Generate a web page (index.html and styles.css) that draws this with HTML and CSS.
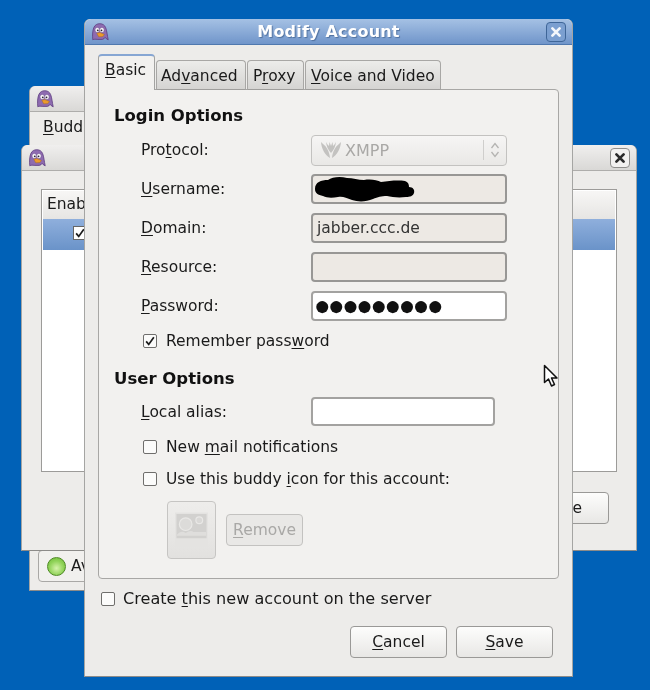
FILE: index.html
```html
<!DOCTYPE html>
<html lang="en">
<head>
<meta charset="utf-8">
<title>Modify Account</title>
<link rel="stylesheet" href="styles.css">
</head>
<body>
<svg class="defs" width="0" height="0" aria-hidden="true">
  <symbol id="pidgin" viewBox="0 0 18 18">
    <path d="M1.800 16.800C1.300 12 1.600 7.600 2.800 4.600 4 1.800 6.200.7 8.800.7c2.600 0 4.800 1.200 5.900 4 1.200 3.100 1.500 7.500 2.500 12.100-1.300-.6-2.400-1.300-3-2.400-.6 1-1.700 1.800-2.900 2H6.200c-1.500-.2-3.200-.5-4.400.4z" fill="#8e6bb0" stroke="#5c3b7f" stroke-width=".8"/>
    <ellipse cx="6.300" cy="7" rx="2.300" ry="2.600" fill="#f5f2f7" stroke="#5c3b7f" stroke-width=".4"/>
    <ellipse cx="10.900" cy="7" rx="2.300" ry="2.600" fill="#f5f2f7" stroke="#5c3b7f" stroke-width=".4"/>
    <circle cx="6.800" cy="7.300" r=".9" fill="#2b2330"/>
    <circle cx="10.500" cy="7.300" r=".9" fill="#2b2330"/>
    <path d="M5.800 10.300l3-.7 4.600 1.800-1.500 2.200-4.200.2z" fill="#eb9a2d" stroke="#a5650f" stroke-width=".4"/>
  </symbol>
  <symbol id="closex" viewBox="0 0 20 20">
    <path d="M6 6l8 8M14 6l-8 8" fill="none" stroke="currentColor" stroke-width="3" stroke-linecap="round"/>
  </symbol>
  <symbol id="tick" viewBox="0 0 14 14">
    <path d="M2.500 7.500l3 3.500 6-8.500" fill="none" stroke="#1c1c1c" stroke-width="2"/>
  </symbol>
</svg>

<main class="desktop">
  <section class="window buddy-window">
    <header class="titlebar titlebar-inactive">
      <svg class="app-icon"><use href="#pidgin"/></svg>
    </header>
    <div class="buddy-menu"><span><u>B</u>uddies</span></div>
    <div class="buddy-fill"></div>
    <div class="status-box">
      <span class="status-dot"></span><span>Available</span>
    </div>
  </section>

  <section class="window accounts-window">
    <header class="titlebar titlebar-inactive">
      <svg class="app-icon"><use href="#pidgin"/></svg>
      <span class="close-btn close-inactive"><svg><use href="#closex"/></svg></span>
    </header>
    <div class="accounts-body">
      <div class="account-list">
        <div class="list-head">Enabled</div>
        <div class="list-selected"><span class="list-check"><svg><use href="#tick"/></svg></span></div>
      </div>
      <div class="accounts-actions"><span class="gtk-btn accounts-close">Close</span></div>
    </div>
  </section>

  <section class="window modify-window">
    <header class="titlebar titlebar-active">
      <svg class="app-icon"><use href="#pidgin"/></svg>
      <h1 class="title">Modify Account</h1>
      <span class="close-btn close-active"><svg><use href="#closex"/></svg></span>
    </header>
    <div class="modify-body">
      <nav class="tabs">
        <span class="tab tab-active"><u>B</u>asic</span>
        <span class="tab">Ad<u>v</u>anced</span>
        <span class="tab">P<u>r</u>oxy</span>
        <span class="tab"><u>V</u>oice and Video</span>
      </nav>
      <div class="panel">
        <h2 class="section-title">Login Options</h2>
        <div class="form-grid">
          <label class="field-label">Pro<u>t</u>ocol:</label>
          <div class="combo">
            <svg class="xmpp-icon" viewBox="0 0 22 18"><path d="M1 1c.5 7 4 13 9 16-.5-6-3-11-7-14zM21 1c-.5 7-4 13-9 16 .5-6 3-11 7-14zM6 1c.5 4 2 8 5 11 3-3 4.500-7 5-11-1 2-2 3-3 4l-.5-4-1.500 4-1.500-4-.5 4c-1-1-2-2-3-4z" fill="#c3c2c0"/></svg>
            <span class="combo-text">XMPP</span>
            <span class="combo-arrows"><svg viewBox="0 0 10 18"><path d="M1.500 7L5 2.500 8.500 7M1.500 11L5 15.500 8.500 11" fill="none" stroke="#b4b3b1" stroke-width="1.300"/></svg></span>
          </div>
          <label class="field-label"><u>U</u>sername:</label>
          <div class="entry entry-readonly">
            <svg class="scribble" viewBox="0 0 102 26"><path d="M1 13C1 6 7 4 14 4c4-3 12-4 19-2 6 0 11 2 17 2 7-1 13 0 17 2 8-1 16-2 24-1 3 1 4 3 4 6 4 0 6 3 5 6-1 3-4 4-8 4-8 1-14 0-19-1-6 0-9 1-14 3-7 3-15 3-21 1-6-2-9-4-14-3-6 1-11 1-15-1C4 19 1 17 1 13z" fill="#000"/></svg>
          </div>
          <label class="field-label"><u>D</u>omain:</label>
          <div class="entry entry-readonly"><span>jabber.ccc.de</span></div>
          <label class="field-label"><u>R</u>esource:</label>
          <div class="entry entry-readonly"></div>
          <label class="field-label"><u>P</u>assword:</label>
          <div class="entry entry-white dots">●●●●●●●●●</div>
        </div>
        <label class="check-row remember"><span class="check"><svg><use href="#tick"/></svg></span><span>Remember pass<u>w</u>ord</span></label>

        <h2 class="section-title user-title">User Options</h2>
        <div class="alias-row">
          <label class="alias-label"><u>L</u>ocal alias:</label>
          <div class="entry entry-white alias-entry"></div>
        </div>
        <label class="check-row mail"><span class="check"></span><span>New <u>m</u>ail notifications</span></label>
        <label class="check-row buddy"><span class="check"></span><span>Use this buddy <u>i</u>con for this account:</span></label>
        <div class="icon-row">
          <span class="icon-btn">
            <svg viewBox="0 0 34 36"><rect x="0" y="0" width="34" height="36" fill="#e4e3e1"/><rect x="1.500" y="1.500" width="31" height="25" fill="#d2d1cf"/><circle cx="11" cy="12" r="6.500" fill="#dcdbd9" stroke="#e9e8e6" stroke-width="1.200"/><circle cx="25" cy="8" r="3.500" fill="#d9d8d6" stroke="#e9e8e6" stroke-width="1.200"/><path d="M2 23c3-4 6-4 9-2 3-2 6-3 8-1h13v4H2z" fill="#dfdedc"/></svg>
          </span>
          <span class="gtk-btn remove-btn"><span><u>R</u>emove</span></span>
        </div>
      </div>
      <label class="check-row create"><span class="check"></span><span>Create <u>t</u>his new account on the server</span></label>
      <div class="dialog-actions">
        <span class="gtk-btn action-btn"><span><u>C</u>ancel</span></span>
        <span class="gtk-btn action-btn"><span><u>S</u>ave</span></span>
      </div>
    </div>
  </section>

  <svg class="cursor" viewBox="0 0 16 24"><path d="M1.500 1.500v17l4-3.500 3 7 3-1.500-3-6.500h5.500z" fill="#fff" stroke="#111" stroke-width="1.500" stroke-linejoin="round"/></svg>
</main>
</body>
</html>
```

FILE: styles.css
```css
* { box-sizing: border-box; }
html, body { margin: 0; padding: 0; }
body {
  width: 650px;
  height: 690px;
  overflow: hidden;
  font-family: "DejaVu Sans", sans-serif;
  font-size: 15.5px;
  color: #1a1a1a;
}
.defs { position: absolute; }
u { text-underline-offset: 2px; text-decoration-thickness: 1px; }

.desktop {
  position: relative;
  width: 650px;
  height: 690px;
  background: #0061b7;
  filter: blur(0.35px);
}

/* Windows sit on a free canvas */
.window {
  position: absolute;
  display: flex;
  flex-direction: column;
  background: #edecea;
  border: 1px solid #a5a5a3;
  border-top: none;
  border-bottom-color: #8c8b89;
  border-radius: 6px 6px 0 0;
}
.buddy-window { left: 29px; top: 86px; width: 300px; height: 505px; }
.accounts-window { left: 21px; top: 145px; width: 616px; height: 406px; }
.modify-window { left: 84px; top: 19px; width: 489px; height: 658px; }

.titlebar {
  flex: none;
  display: flex;
  align-items: center;
  height: 26px;
  padding: 0 6px;
  border-radius: 6px 6px 0 0;
}
.titlebar-inactive {
  background: linear-gradient(#f0efee, #d9d8d6);
  border-bottom: 1px solid #aeadab;
}
.titlebar-active {
  background: linear-gradient(#a5c1e4, #7095ca);
  border-bottom: 1px solid #4f78ae;
}
.app-icon { flex: none; width: 18px; height: 18px; }
.title {
  flex: 1;
  margin: 0;
  padding-left: 2px;
  text-align: center;
  font-size: 16px;
  font-weight: 700;
  letter-spacing: .2px;
  color: #fff;
  text-shadow: 1px 1px 1px #51729f;
}
.close-btn {
  flex: none;
  display: flex;
  width: 20px;
  height: 20px;
  margin-left: auto;
  border-radius: 4px;
}
.close-btn svg { width: 100%; height: 100%; }
.close-active {
  color: #f4f7fb;
  background: #7b9fd0;
  border: 1px solid #3f6698;
}
.close-inactive {
  color: #2b2b2b;
  background: #f2f1f0;
  border: 1px solid #8f8e8c;
}

/* Buddy list window */
.buddy-menu { height: 32px; padding: 6px 13px; flex: none; }
.buddy-fill { flex: 1; }
.status-box {
  flex: none;
  display: flex;
  align-items: center;
  gap: 5px;
  height: 32px;
  margin: 0 0 8px 8px;
  padding-left: 8px;
  background: #f1f0ee;
  border: 1px solid #a9a8a6;
  border-radius: 4px;
}
.status-dot {
  width: 19px;
  height: 19px;
  border-radius: 50%;
  border: 1px solid #4e8a24;
  background: radial-gradient(circle at 50% 60%, #d6f3ab, #8fd257 55%, #6cb936);
}

/* Accounts window */
.accounts-body {
  flex: 1;
  display: flex;
  flex-direction: column;
  padding: 18px 19px 0;
}
.account-list {
  height: 283px;
  flex: none;
  padding: 1px;
  background: #fff;
  border: 1px solid #9c9b99;
}
.list-head {
  height: 28px;
  padding: 4px 4px;
  background: linear-gradient(#f7f6f5, #e6e5e3);
}
.list-selected {
  position: relative;
  height: 31px;
  background: linear-gradient(#8fafdc, #6a93c9);
}
.list-check {
  position: absolute;
  left: 30px;
  top: 7px;
  display: flex;
  width: 14px;
  height: 14px;
  background: #fff;
  border: 1px solid #666;
}
.list-check svg { width: 100%; height: 100%; }
.accounts-actions {
  display: flex;
  justify-content: flex-end;
  padding: 20px 8px 0 0;
}
.accounts-close { width: 96px; height: 32px; }

/* Buttons */
.gtk-btn {
  display: flex;
  align-items: center;
  justify-content: center;
  background: linear-gradient(#fdfdfc, #e8e7e5);
  border: 1px solid #9a9997;
  border-radius: 4px;
}

/* Modify dialog */
.modify-body {
  flex: 1;
  display: flex;
  flex-direction: column;
  padding: 10px 13px 0;
}
.tabs {
  flex: none;
  display: flex;
  align-items: flex-end;
  gap: 1px;
  height: 35px;
  margin-bottom: -1px;
  position: relative;
  z-index: 1;
  white-space: nowrap;
}
.tab {
  height: 30px;
  padding: 5px 5px 0 5px;
  line-height: 20px;
  background: linear-gradient(#ececea, #d5d4d2);
  border: 1px solid #a8a7a5;
  border-bottom-color: #9f9e9c;
  border-radius: 4px 4px 0 0;
}
.tab:nth-child(2) { width: 90px; padding-left: 4px; }
.tab:nth-child(3) { width: 57px; }
.tab:nth-child(4) { width: 136px; }
.tab-active {
  width: 57px;
  height: 36px;
  padding: 4px 5px 0 6px;
  background: #f2f1ef;
  border-color: #a3a3a1;
  border-top: 2px solid #86a6d3;
  border-bottom: none;
}
.panel {
  flex: none;
  height: 490px;
  padding: 16px 15px 0;
  background: #f2f1ef;
  border: 1px solid #a8a7a5;
  border-radius: 0 4px 4px 4px;
}
.section-title {
  margin: 0;
  font-size: 16.500px;
  font-weight: 700;
  line-height: 20px;
  color: #111;
}
.form-grid {
  display: grid;
  grid-template-columns: 170px 196px;
  grid-auto-rows: 30px;
  row-gap: 9px;
  align-items: center;
  margin: 9px 0 0 27px;
}
.field-label { line-height: 21px; padding-top: 1px; }
.alias-label { line-height: 20px; }
.combo {
  display: flex;
  align-items: center;
  height: 31px;
  padding-left: 8px;
  color: #a9a8a6;
  background: linear-gradient(#f6f5f4, #e9e8e6);
  border: 1px solid #c3c2c0;
  border-radius: 4px;
}
.xmpp-icon { flex: none; width: 22px; height: 18px; }
.combo-text { flex: 1; margin-left: 3px; font-size: 16px; }
.combo-arrows {
  flex: none;
  display: flex;
  align-items: center;
  justify-content: center;
  width: 23px;
  height: 20px;
  border-left: 1px solid #cfcecc;
}
.combo-arrows svg { width: 10px; height: 18px; }
.entry {
  display: flex;
  align-items: center;
  height: 30px;
  padding: 0 4px;
  border: 2px solid #989795;
  border-radius: 4px;
}
.entry-readonly { background: #ede9e4; color: #333; }
.entry-white { background: #fff; border-color: #a3a2a0; }
.scribble { flex: none; width: 102px; height: 26px; margin-left: -3px; }
.dots {
  font-family: "Liberation Sans", sans-serif;
  font-size: 28px;
  letter-spacing: -2.800px;
  line-height: 26px;
  color: #111;
  padding-left: 1px;
  overflow: hidden;
}
.check-row {
  display: flex;
  align-items: center;
  gap: 9px;
  line-height: 20px;
}
.check {
  flex: none;
  display: flex;
  width: 14px;
  height: 14px;
  background: #fbfbfa;
  border: 1px solid #6f6e6c;
  border-radius: 2px;
}
.check svg { width: 100%; height: 100%; }
.remember { margin: 10px 0 0 29px; }
.user-title { margin-top: 18px; }
.alias-row {
  display: grid;
  grid-template-columns: 170px 184px;
  align-items: center;
  margin: 8px 0 0 27px;
}
.alias-entry { height: 29px; }
.mail { margin: 11px 0 0 29px; }
.buddy { margin: 12px 0 0 29px; }
.icon-row {
  display: flex;
  align-items: center;
  gap: 10px;
  margin: 12px 0 0 53px;
}
.icon-btn {
  display: flex;
  width: 49px;
  height: 58px;
  padding: 10px 7px 10px;
  background: linear-gradient(#eeedeb, #e2e1df);
  border: 1px solid #c6c5c3;
  border-radius: 4px;
}
.icon-btn svg { width: 100%; height: 100%; }
.remove-btn {
  width: 77px;
  height: 32px;
  color: #a9a8a6;
  background: #e9e8e6;
  border-color: #c3c2c0;
}
.create { margin: 10px 0 0 3px; gap: 8px; font-size: 16.100px; }
.dialog-actions {
  display: flex;
  justify-content: flex-end;
  gap: 9px;
  padding: 17px 6px 0 0;
}
.action-btn { width: 97px; height: 32px; }

.cursor {
  position: absolute;
  left: 543px;
  top: 364px;
  width: 16px;
  height: 24px;
}
```
